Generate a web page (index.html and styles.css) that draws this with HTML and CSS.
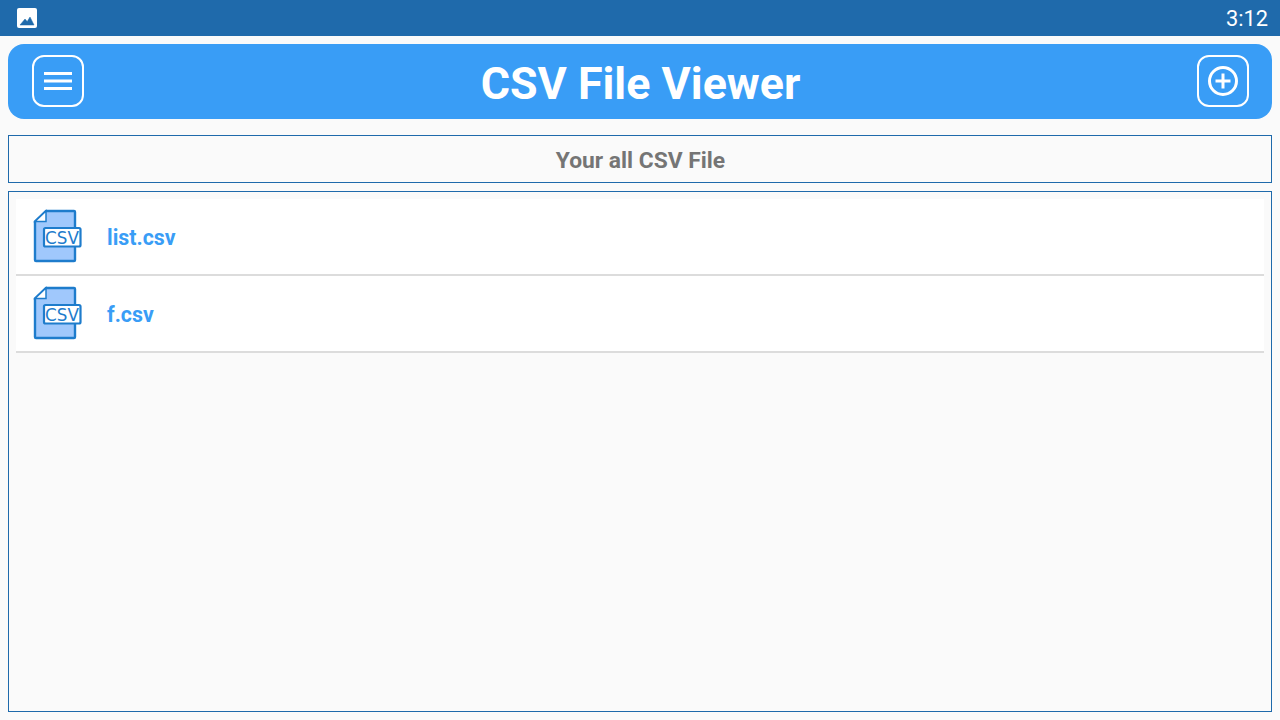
FILE: index.html
```html
<!DOCTYPE html>
<html lang="en">
<head>
<meta charset="utf-8">
<title>CSV File Viewer</title>
<link rel="stylesheet" href="styles.css">
</head>
<body>
<div class="status">
  <svg class="status-icon" width="22" height="22" viewBox="0 0 22 22"><rect x="1" y="1" width="20" height="20" rx="2" fill="#fff"/><path d="M4 18L9 12L11.200 14.500L14 10L18 18z" fill="#1f6aab" stroke="#1f6aab" stroke-width="0.500" stroke-linejoin="round"/></svg>
  <span class="time">3:12</span>
</div>
<div class="content">
  <header class="appbar">
    <button class="iconbtn" aria-label="Menu">
      <svg width="28" height="20" viewBox="0 0 28 20"><path d="M0 2.500h28M0 10h28M0 17.500h28" stroke="#fff" stroke-width="3" fill="none"/></svg>
    </button>
    <h1 class="title">CSV File Viewer</h1>
    <button class="iconbtn" aria-label="Add">
      <svg width="32" height="32" viewBox="0 0 32 32"><circle cx="16" cy="16" r="13.500" stroke="#fff" stroke-width="3" fill="none"/><path d="M16 8.500v15M8.500 16h15" stroke="#fff" stroke-width="3" fill="none"/></svg>
    </button>
  </header>
  <div class="subtitle">Your all CSV File</div>
  <div class="list">
    <div class="row">
      <svg class="fileicon" width="50" height="54" viewBox="0 0 50 54"><path d="M13 2H41a1 1 0 0 1 1 1V51a1 1 0 0 1-1 1H3a1 1 0 0 1-1-1V12.500z" fill="#a0c8fc" stroke="#1e7ccc" stroke-width="2.400"/><path d="M13 2v10.500H2z" fill="#fff" stroke="#1e7ccc" stroke-width="1.500"/><rect x="11" y="19" width="36.500" height="18.500" rx="1.500" fill="#fff" stroke="#1e7ccc" stroke-width="2.200"/><text class="csvtext" x="29" y="34.500">CSV</text></svg>
      <span class="fname">list.csv</span>
    </div>
    <div class="row">
      <svg class="fileicon" width="50" height="54" viewBox="0 0 50 54"><path d="M13 2H41a1 1 0 0 1 1 1V51a1 1 0 0 1-1 1H3a1 1 0 0 1-1-1V12.500z" fill="#a0c8fc" stroke="#1e7ccc" stroke-width="2.400"/><path d="M13 2v10.500H2z" fill="#fff" stroke="#1e7ccc" stroke-width="1.500"/><rect x="11" y="19" width="36.500" height="18.500" rx="1.500" fill="#fff" stroke="#1e7ccc" stroke-width="2.200"/><text class="csvtext" x="29" y="34.500">CSV</text></svg>
      <span class="fname">f.csv</span>
    </div>
  </div>
</div>
</body>
</html>
```
FILE: styles.css
```css
* { box-sizing: border-box; }
html, body { margin: 0; height: 720px; overflow: hidden; }
body { background: #fafafa; font-family: Roboto, "Liberation Sans", sans-serif; }
.status { height: 36px; background: #1f6aab; display: flex; align-items: center; justify-content: space-between; padding: 0 12px 0 16px; color: #fff; }
.status-icon { display: block; }
.time { font-size: 21.8px; line-height: 36px; padding-top: 2px; }
.content { height: 684px; padding: 8px 8px 8px; display: flex; flex-direction: column; }
.appbar { height: 75px; background: #399df6; border-radius: 16px; display: flex; align-items: center; justify-content: space-between; padding: 0 23px 1px 24px; flex: none; }
.iconbtn { width: 52px; height: 52px; border: 2px solid #fff; border-radius: 12px; background: transparent; padding: 0; display: flex; align-items: center; justify-content: center; }
.title { margin: 0; padding-top: 5px; color: #fff; font-size: 44.8px; line-height: 52px; font-weight: 700; }
.subtitle { margin-top: 16px; height: 48px; flex: none; border: 1px solid #1f6aab; color: #757575; font-size: 22.8px; font-weight: 700; line-height: 46px; padding: 2px 0 0 1px; text-align: center; }
.list { margin-top: 8px; flex: 1; border: 1px solid #1f6aab; padding: 7px 7px; }
.row { height: 77px; background: #fff; border-bottom: 2px solid #dcdcdc; display: flex; align-items: center; padding-left: 17px; gap: 24px; }
.fileicon { display: block; flex: none; margin-bottom: 1px; }
.csvtext { font-family: "DejaVu Sans", sans-serif; font-size: 16.8px; fill: #1e7ccc; text-anchor: middle; }
.fname { color: #399df6; font-size: 21.33px; font-weight: 700; padding-top: 2px; }
```
